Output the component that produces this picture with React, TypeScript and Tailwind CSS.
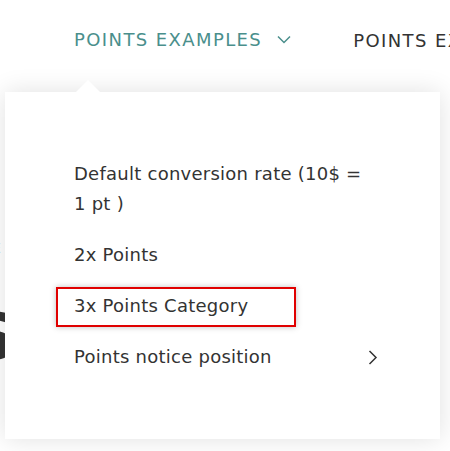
import React from 'react';

const items = [
  { label: 'Default conversion rate (10$ =', label2: '1 pt )' },
  { label: '2x Points' },
  { label: '3x Points Category', marked: true },
  { label: 'Points notice position', sub: true },
];

export default function App() {
  return (
    <div className="relative w-[450px] h-[451px] overflow-hidden bg-white font-['DejaVu_Sans',sans-serif] text-[#333]">
      {/* top menu bar */}
      <div className="flex items-center h-[80px] pl-[74px] gap-[62px] text-[18px] tracking-[1.4px] whitespace-nowrap">
        <div className="flex items-center gap-[15px] text-[#4a8f8c] pb-[1px]">
          <span>POINTS EXAMPLES</span>
          <svg width="14" height="9" viewBox="0 0 14 9" fill="none">
            <path d="M1 1.5 L7 7.5 L13 1.5" stroke="#4a8f8c" strokeWidth="1.5" />
          </svg>
        </div>
        <span className="text-[#333]">POINTS EXAMPLES</span>
      </div>

      {/* page content behind */}
      <div className="absolute left-[-8px] top-[238px] text-[14px] text-[#999]">E</div>
      <div className="absolute left-[-30px] top-[305px] text-[64px] font-bold leading-none text-[#333]">S</div>

      {/* dropdown */}
      <div className="absolute left-[5px] top-[92px] w-[435px] h-[347px] bg-white shadow-[0_0_24px_rgba(0,0,0,0.12)]">
        <div className="absolute left-[71px] -top-[12px] w-0 h-0 border-l-[12px] border-r-[12px] border-b-[12px] border-l-transparent border-r-transparent border-b-white" />
        <div className="flex flex-col gap-[21px] pt-[67px] pl-[69px] pr-[60px] text-[18px] tracking-[0.25px] leading-[30px]">
          {items.map((it) => (
            <div key={it.label} className="relative flex items-center justify-between">
              <span>
                {it.label}
                {it.label2 && (
                  <>
                    <br />
                    {it.label2}
                  </>
                )}
              </span>
              {it.sub && (
                <svg width="10" height="15" viewBox="0 0 10 15" fill="none" className="mr-[2px]">
                  <path d="M1.5 1 L8 7.5 L1.5 14" stroke="#333" strokeWidth="1.5" />
                </svg>
              )}
              {it.marked && (
                <div className="absolute left-[-18px] top-[-4px] w-[240px] h-[40px] border-2 border-[#e00000] shadow-[0_0_6px_rgba(0,0,0,0.25)]" />
              )}
            </div>
          ))}
        </div>
      </div>
    </div>
  );
}
